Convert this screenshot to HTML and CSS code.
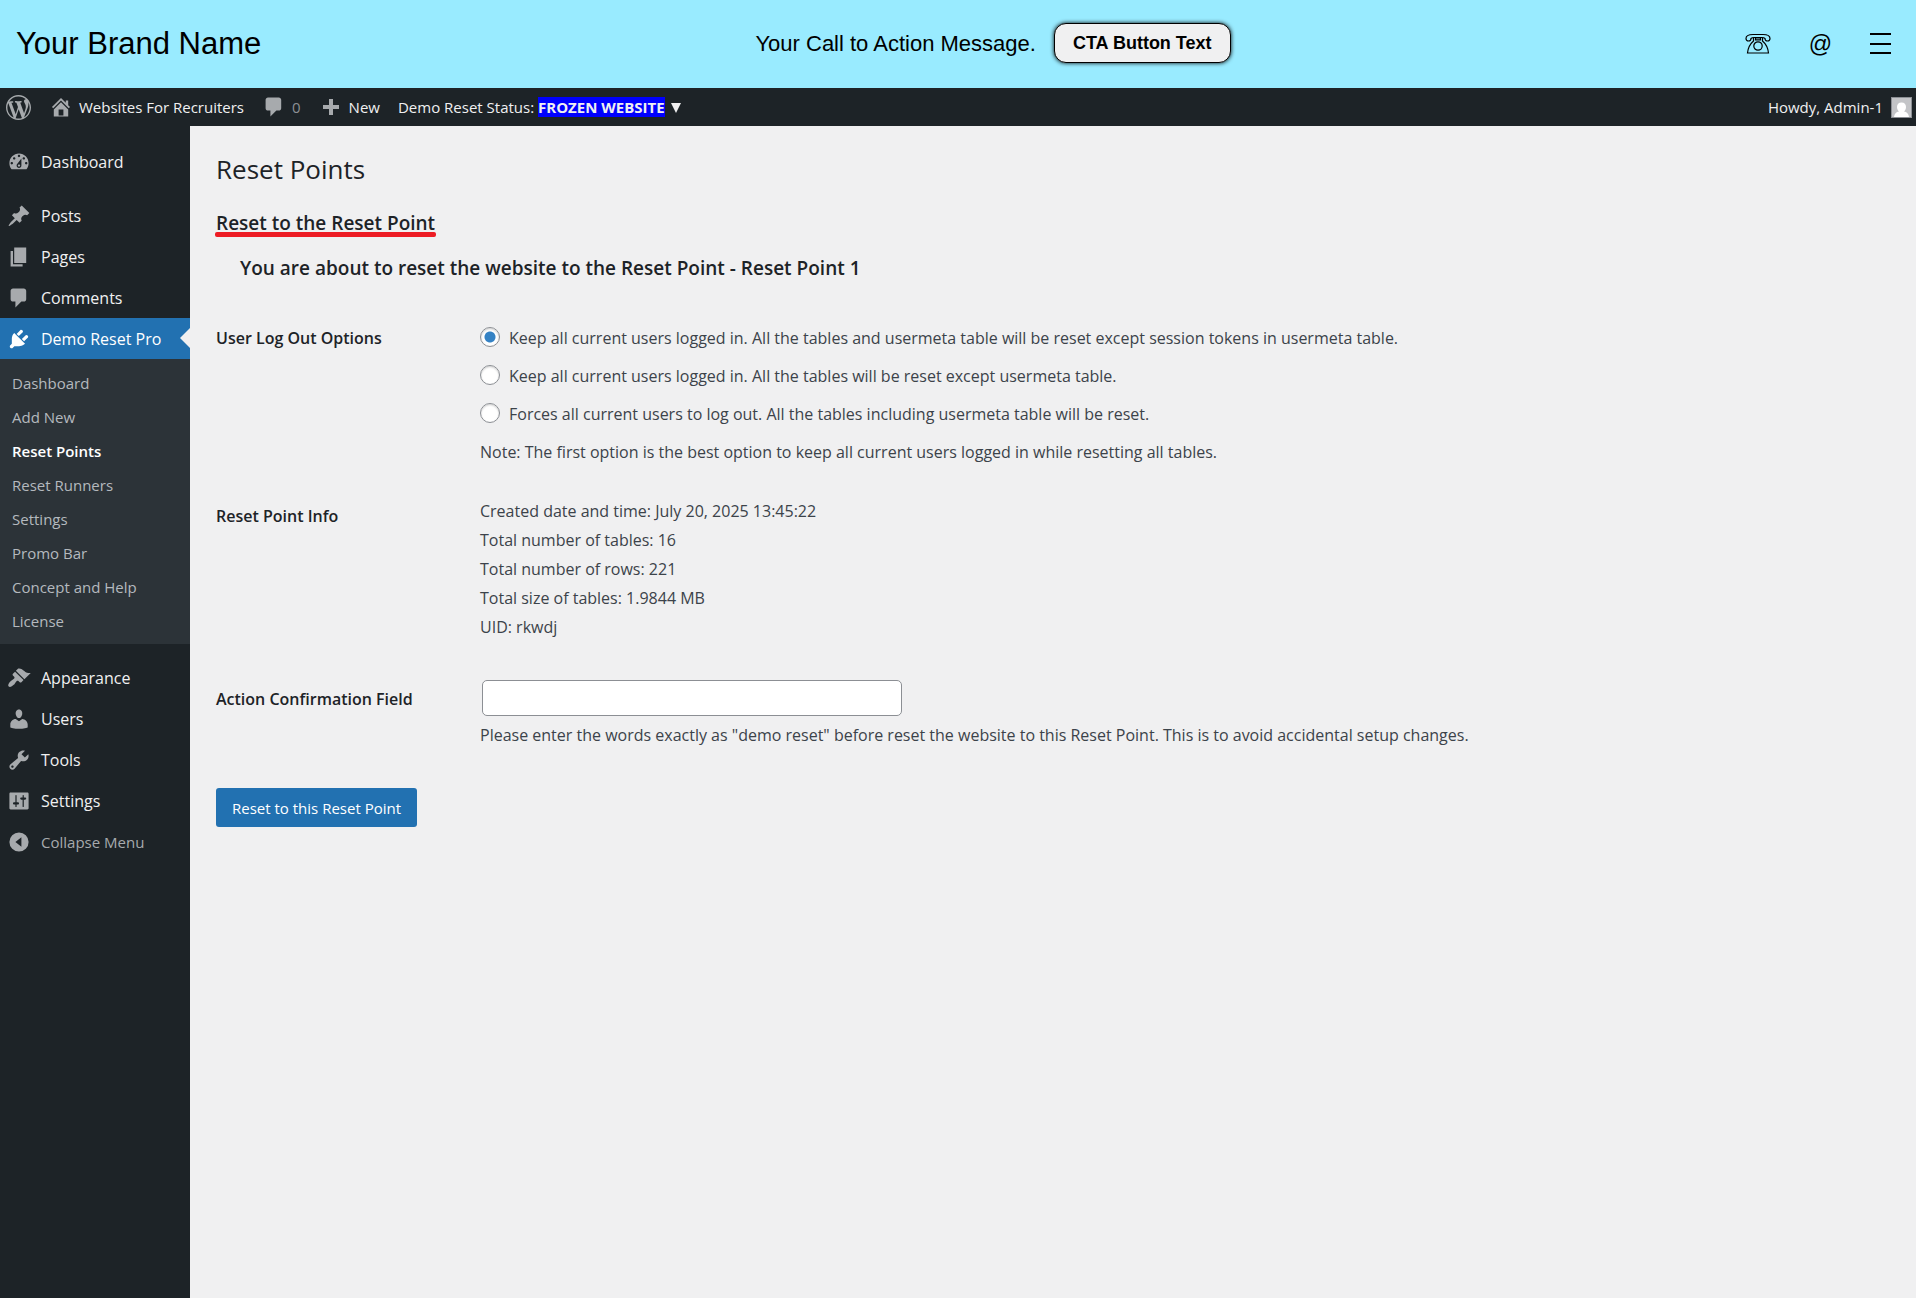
FILE: index.html
```html
<!DOCTYPE html>
<html lang="en">
<head>
<meta charset="utf-8">
<title>Reset Points</title>
<link rel="stylesheet" href="styles.css">
</head>
<body>
<header class="promo">
  <a class="promo-brand" href="#">Your Brand Name</a>
  <div class="promo-cta">
    <span class="promo-message">Your Call to Action Message.</span>
    <button class="promo-button" type="button">CTA Button Text</button>
  </div>
  <nav class="promo-links" aria-label="Contact">
    <a href="#" aria-label="Phone"><svg width="26" height="22" viewBox="0 0 26 22" fill="none" stroke="#000" stroke-width="1.2"><path d="M1 5.500C1 3 3 1.500 8 1.500h10c5 0 7 1.500 7 4 0 1.500-1 2.500-2.500 2.500S20 7 20 5.500c-1-1-2-1-3-1H9c-1 0-2 0-3 1C6 7 5 8 3.500 8S1 7 1 5.500zM8.500 4.500v3.500C5 11 3 15 2.500 20h21C23 15 21 11 17.500 8V4.500"/><path d="M10.500 4.500h5V7h-5z" fill="#000" fill-opacity=".5"/><circle cx="13" cy="13" r="4.200"/></svg></a>
    <a class="promo-at" href="#" aria-label="Email">@</a>
    <a href="#" aria-label="Menu"><svg width="22" height="22" viewBox="0 0 22 22" fill="#000"><path d="M0 0h21v2H0zM0 10h21v2H0zM0 19h21v2H0z"/></svg></a>
  </nav>
</header>

<div class="adminbar">
  <a class="bar-item bar-logo" href="#" aria-label="About WordPress"><svg width="25" height="25" viewBox="0 0 20 20"><path d="M20 10c0-5.510-4.490-10-10-10C4.480 0 0 4.490 0 10c0 5.520 4.480 10 10 10 5.510 0 10-4.480 10-10zM7.780 15.370L4.370 6.220c.55-.02 1.170-.08 1.170-.08.5-.06.44-1.130-.06-1.110 0 0-1.450.11-2.370.11-.18 0-.37 0-.58-.01C4.120 2.690 6.870 1.110 10 1.110c2.330 0 4.450.87 6.050 2.340-.68-.11-1.650.39-1.650 1.580 0 .74.45 1.360.9 2.100.35.61.55 1.360.55 2.460 0 1.490-1.400 5-1.400 5l-3.030-8.370c.54-.02.82-.17.82-.17.5-.05.44-1.250-.06-1.220 0 0-1.440.12-2.380.12-.87 0-2.330-.12-2.330-.12-.5-.03-.56 1.200-.06 1.220l.92.08 1.260 3.410zM17.410 10c.24-.64.74-1.870.43-4.250.7 1.290 1.050 2.710 1.050 4.250 0 3.290-1.730 6.240-4.400 7.780.97-2.590 1.940-5.200 2.920-7.780zM6.100 18.090C3.120 16.650 1.110 13.530 1.110 10c0-1.300.23-2.480.72-3.590C3.250 10.300 4.670 14.200 6.100 18.090zm4.030-6.630l2.580 6.980c-.86.29-1.760.45-2.710.45-.79 0-1.570-.11-2.290-.33.81-2.380 1.620-4.740 2.420-7.100z"/></svg></a>
  <a class="bar-item bar-site" href="#"><svg width="24" height="24" viewBox="0 0 20 20"><path d="M16 8.500l1.530 1.530-1.060 1.060L10 4.600l-6.470 6.490-1.060-1.060L10 2.500l4 4v-2h2v4zm-6-2.460l6 5.990V18H4v-5.970zM12 17v-5H8v5h4z"/></svg>Websites For Recruiters</a>
  <a class="bar-item bar-comments" href="#"><svg width="24" height="24" viewBox="0 0 20 20"><path d="M5 2h9c1.100 0 2 .9 2 2v7c0 1.100-.9 2-2 2h-2l-5 5v-5H5c-1.100 0-2-.9-2-2V4c0-1.100.9-2 2-2z"/></svg>0</a>
  <a class="bar-item bar-new" href="#"><svg width="24" height="24" viewBox="0 0 24 24"><path d="M10 4h4v6h6v4h-6v6h-4v-6H4v-4h6z"/></svg>New</a>
  <a class="bar-item" href="#"><span>Demo Reset Status: <strong class="status">FROZEN WEBSITE</strong></span><svg class="caret" width="10" height="11" viewBox="0 0 10 11"><path d="M0 1h10L5 11z"/></svg></a>
  <a class="bar-item bar-user" href="#">Howdy, Admin-1<svg class="avatar" width="21" height="21" viewBox="0 0 21 21"><path class="avatar-edge" d="M0 0h21v21H0z"/><path class="avatar-bg" d="M1 1h19v19H1z"/><path class="avatar-figure" d="M10.500 5.500c3 0 4.500 2 4.500 4.500 0 2-1 3.500-2 4.500 3 .5 4.500 2 5 5.500h-15c.5-3.500 2-5 5-5.500-1-1-2-2.500-2-4.500 0-2.500 1.500-4.500 4.500-4.500z"/></svg></a>
</div>

<div class="layout">
  <nav class="sidebar" aria-label="Main menu">
    <ul class="menu">
      <li><a class="menu-item" href="#"><svg width="24" height="24" viewBox="0 0 20 20"><path d="M3.760 16h12.480c1.100-1.370 1.760-3.110 1.760-5 0-4.420-3.580-8-8-8s-8 3.580-8 8c0 1.890.66 3.630 1.760 5zM10 4c.55 0 1 .45 1 1s-.45 1-1 1-1-.45-1-1 .45-1 1-1zM6 6c.55 0 1 .45 1 1s-.45 1-1 1-1-.45-1-1 .45-1 1-1zm8 0c.55 0 1 .45 1 1s-.45 1-1 1-1-.45-1-1 .45-1 1-1zm-5.370 5.550L12 7v6c0 1.100-.9 2-2 2s-2-.9-2-2c0-.57.24-1.080.63-1.450zM4 10c.55 0 1 .45 1 1s-.45 1-1 1-1-.45-1-1 .45-1 1-1zm12 0c.55 0 1 .45 1 1s-.45 1-1 1-1-.45-1-1 .45-1 1-1zm-5 3c0-.55-.45-1-1-1s-1 .45-1 1 .45 1 1 1 1-.45 1-1z"/></svg>Dashboard</a></li>
      <li class="menu-group"><a class="menu-item" href="#"><svg width="24" height="24" viewBox="0 0 20 20"><path d="M10.440 3.020l1.820-1.820 6.360 6.350-1.830 1.820c-1.050-.68-2.480-.57-3.410.36l-.75.75c-.92.93-1.040 2.350-.35 3.410l-1.830 1.820-2.410-2.410-2.800 2.790c-.42.42-3.380 2.710-3.800 2.290s1.860-3.390 2.280-3.810l2.790-2.790L4.100 9.360l1.830-1.820c1.050.69 2.480.57 3.400-.36l.75-.75c.93-.92 1.050-2.350.36-3.410z"/></svg>Posts</a></li>
      <li><a class="menu-item" href="#"><svg width="24" height="24" viewBox="0 0 20 20"><path d="M6 15V2h10v13H6zm-1 1h8v2H3V5h2v11z"/></svg>Pages</a></li>
      <li><a class="menu-item" href="#"><svg width="24" height="24" viewBox="0 0 20 20"><path d="M5 2h9c1.100 0 2 .9 2 2v7c0 1.100-.9 2-2 2h-2l-5 5v-5H5c-1.100 0-2-.9-2-2V4c0-1.100.9-2 2-2z"/></svg>Comments</a></li>
      <li>
        <a class="menu-item is-open" href="#"><svg width="24" height="24" viewBox="0 0 20 20"><path d="M13.110 4.360L9.870 7.600 8 5.730l3.240-3.240c.35-.34 1.050-.2 1.560.32.52.51.66 1.210.31 1.550zm-8 1.770l.91-1.120 9.010 9.010-1.190.84c-.71.71-2.630 1.160-3.820 1.160H6.140L4.900 17.260c-.59.59-1.540.59-2.120 0-.59-.58-.59-1.530 0-2.120l1.240-1.240v-3.880c0-1.130.4-3.190 1.090-3.890zm7.260 3.970l3.240-3.240c.34-.35 1.040-.21 1.550.31.52.51.66 1.210.31 1.550l-3.240 3.250z"/></svg>Demo Reset Pro</a>
        <ul class="submenu">
          <li><a href="#">Dashboard</a></li>
          <li><a href="#">Add New</a></li>
          <li><a class="is-current" href="#" aria-current="page">Reset Points</a></li>
          <li><a href="#">Reset Runners</a></li>
          <li><a href="#">Settings</a></li>
          <li><a href="#">Promo Bar</a></li>
          <li><a href="#">Concept and Help</a></li>
          <li><a href="#">License</a></li>
        </ul>
      </li>
      <li class="menu-group"><a class="menu-item" href="#"><svg width="24" height="24" viewBox="0 0 20 20"><path d="M14.480 11.060L7.410 3.990l1.500-1.500c.5-.56 2.300-.47 3.510.32 1.210.8 1.430 1.280 2.910 2.100 1.180.64 2.450 1.260 4.450.85zm-.71.71L6.700 4.700 4.930 6.470c-.39.39-.39 1.020 0 1.410l1.060 1.060c.39.39.39 1.030 0 1.420-.6.6-1.430 1.110-2.210 1.690-.35.26-.7.53-1.010.84C1.430 14.230.4 16.080 1.400 17.070c.99 1 2.840-.03 4.180-1.360.31-.31.58-.66.85-1.020.57-.78 1.080-1.610 1.690-2.210.39-.39 1.020-.39 1.410 0l1.060 1.060c.39.39 1.020.39 1.410 0z"/></svg>Appearance</a></li>
      <li><a class="menu-item" href="#"><svg width="24" height="24" viewBox="0 0 20 20"><path d="M10 9.250c-2.270 0-2.730-3.440-2.730-3.440C7 4.020 7.820 2 9.970 2c2.160 0 2.980 2.020 2.710 3.810 0 0-.41 3.440-2.680 3.440zm0 2.570L12.720 10c2.390 0 4.520 2.330 4.520 4.530v2.490s-3.650 1.130-7.240 1.130c-3.650 0-7.240-1.130-7.240-1.130v-2.490c0-2.250 1.940-4.480 4.470-4.480z"/></svg>Users</a></li>
      <li><a class="menu-item" href="#"><svg width="24" height="24" viewBox="0 0 20 20"><path d="M16.680 9.770c-1.340 1.340-3.300 1.670-4.950.99l-5.410 6.520c-.99.99-2.590.99-3.580 0s-.99-2.590 0-3.570l6.520-5.420c-.68-1.650-.35-3.610.99-4.950 1.280-1.280 3.120-1.620 4.720-1.060l-2.890 2.890 2.820 2.820 2.860-2.870c.53 1.580.18 3.390-1.080 4.650zM3.810 16.210c.4.39 1.040.39 1.430 0 .4-.4.4-1.040 0-1.430-.39-.4-1.030-.4-1.430 0-.39.39-.39 1.030 0 1.430z"/></svg>Tools</a></li>
      <li><a class="menu-item" href="#"><svg width="24" height="24" viewBox="0 0 20 20"><path d="M18 16V4c0-.55-.45-1-1-1H3c-.55 0-1 .45-1 1v12c0 .55.45 1 1 1h14c.55 0 1-.45 1-1zM8 11h1c.55 0 1 .45 1 1s-.45 1-1 1H8v1.500c0 .28-.22.5-.5.5s-.5-.22-.5-.5V13H6c-.55 0-1-.45-1-1s.45-1 1-1h1V5.500c0-.28.22-.5.5-.5s.5.22.5.5V11zm5-2h-1c-.55 0-1-.45-1-1s.45-1 1-1h1V5.500c0-.28.22-.5.5-.5s.5.22.5.5V7h1c.55 0 1 .45 1 1s-.45 1-1 1h-1v5.500c0 .28-.22.5-.5.5s-.5-.22-.5-.5V9z"/></svg>Settings</a></li>
      <li><button class="menu-item menu-collapse" type="button"><svg width="24" height="24" viewBox="0 0 20 20"><path fill-rule="evenodd" d="M10 2a8 8 0 1 0 0 16 8 8 0 0 0 0-16zM12 6v8l-5-4z"/></svg>Collapse Menu</button></li>
    </ul>
  </nav>

  <main class="content">
    <h1 class="title">Reset Points</h1>
    <h2 class="subtitle"><span class="marked">Reset to the Reset Point</span></h2>
    <h2 class="subtitle notice">You are about to reset the website to the Reset Point - Reset Point 1</h2>

    <form class="form">
      <div class="row" role="radiogroup" aria-labelledby="logout-label">
        <div class="label" id="logout-label">User Log Out Options</div>
        <div class="field">
          <label class="option"><input type="radio" name="logout" checked>Keep all current users logged in. All the tables and usermeta table will be reset except session tokens in usermeta table.</label>
          <label class="option"><input type="radio" name="logout">Keep all current users logged in. All the tables will be reset except usermeta table.</label>
          <label class="option"><input type="radio" name="logout">Forces all current users to log out. All the tables including usermeta table will be reset.</label>
          <p class="option">Note: The first option is the best option to keep all current users logged in while resetting all tables.</p>
        </div>
      </div>
      <div class="row row-info">
        <div class="label">Reset Point Info</div>
        <ul class="field info">
          <li>Created date and time: July 20, 2025 13:45:22</li>
          <li>Total number of tables: 16</li>
          <li>Total number of rows: 221</li>
          <li>Total size of tables: 1.9844 MB</li>
          <li>UID: rkwdj</li>
        </ul>
      </div>
      <div class="row row-confirm">
        <label class="label" for="confirm">Action Confirmation Field</label>
        <div class="field">
          <input class="textbox" id="confirm" type="text" aria-describedby="confirm-help">
          <p class="help" id="confirm-help">Please enter the words exactly as "demo reset" before reset the website to this Reset Point. This is to avoid accidental setup changes.</p>
        </div>
      </div>
      <button class="submit" type="button">Reset to this Reset Point</button>
    </form>
  </main>
</div>
</body>
</html>
```
FILE: styles.css
```css
* { box-sizing: border-box; }

body {
  margin: 0;
  min-height: 100vh;
  display: flex;
  flex-direction: column;
  background: #f0f0f1;
  color: #3c434a;
  font: 16px/24px "Open Sans", "Noto Sans", sans-serif;
}

h1, h2, p, ul { margin: 0; padding: 0; }
ul { list-style: none; }
a { color: inherit; text-decoration: none; }
svg { flex: none; display: block; }

/* Promo bar */
.promo {
  display: grid;
  grid-template-columns: 1fr auto 1fr;
  align-items: center;
  height: 88px;
  padding: 0 24px 0 16px;
  background: #99ebff;
  color: #000;
  font-family: "Liberation Sans", Arial, sans-serif;
}
.promo-brand { font-size: 31px; line-height: 36px; }
.promo-cta { display: flex; align-items: center; gap: 18px; padding-left: 78px; }
.promo-message { font-size: 22px; }
.promo-button {
  height: 40px;
  margin-bottom: 2px;
  padding: 0 18px;
  border: 1px solid #000;
  border-radius: 12px;
  background: #f0f0f1;
  box-shadow: 0 0 4px #000;
  color: #000;
  font: bold 18px/20px "Liberation Sans", Arial, sans-serif;
}
.promo-links { display: flex; justify-content: flex-end; align-items: center; gap: 38px; }
.promo-at { font-size: 23px; }

/* Admin bar */
.adminbar {
  display: flex;
  align-items: center;
  gap: 18px;
  height: 38px;
  padding: 0 4px 0 6px;
  background: #1d2327;
  color: #f0f0f1;
  font-size: 15px;
  fill: #a7aaad;
}
.bar-item { display: flex; align-items: center; gap: 6px; white-space: nowrap; }
.bar-comments { color: #8c8f94; }
.bar-user { gap: 8px; margin-left: auto; }
.status { background: #00f; }
.caret { fill: #f0f0f1; }
.avatar-edge { fill: #8c8f94; }
.avatar-bg { fill: #c3c4c7; }
.avatar-figure { fill: #fff; }

/* Sidebar */
.layout { flex: 1; display: flex; }
.sidebar {
  flex: none;
  width: 190px;
  padding-top: 15px;
  background: #1d2327;
}
.menu-group { margin-top: 13px; }
.menu-item {
  position: relative;
  display: flex;
  align-items: center;
  gap: 10px;
  width: 100%;
  height: 41px;
  padding: 0 0 0 7px;
  border: 0;
  background: none;
  color: #f0f0f1;
  fill: #a7aaad;
  font: inherit;
}
.menu-collapse { color: #a7aaad; font-size: 15px; }
.is-open { background: #2271b1; color: #fff; fill: #fff; }
.is-open::after {
  content: "";
  position: absolute;
  right: 0;
  top: 10px;
  border: 10px solid transparent;
  border-left: 0;
  border-right-color: #f0f0f1;
}
.submenu {
  padding: 7px 0 6px;
  background: #2c3338;
  color: #b4b9be;
  font-size: 15px;
}
.submenu a { display: block; padding: 5px 12px; }
.submenu .is-current { color: #fff; font-weight: 600; }

/* Page */
.content { flex: 1; padding: 26px; }
.title { color: #1d2327; font-size: 26px; font-weight: 400; line-height: 34px; }
.subtitle { color: #1d2327; font-size: 19px; font-weight: 600; line-height: 28px; margin-top: 23px; }
.marked { position: relative; }
.marked::after {
  content: "";
  position: absolute;
  left: -1px;
  right: -1px;
  bottom: -1px;
  height: 5px;
  border-radius: 2px;
  background: #ed1c24;
}
.notice { margin-top: 17px; padding-left: 24px; }

.form { margin-top: 37px; }
.row { display: grid; grid-template-columns: 264px 1fr; }
.row-info { margin-top: 26px; }
.row-confirm { margin-top: 38px; }
.label { color: #1d2327; font-weight: 600; padding-top: 7px; }
.option { display: flex; align-items: center; gap: 9px; height: 38px; }
.info li { line-height: 29px; }
.row input[type="radio"] {
  appearance: none;
  flex: none;
  width: 20px;
  height: 20px;
  margin: 0 0 2px;
  border: 1px solid #8c8f94;
  border-radius: 50%;
  background: #fff;
  box-shadow: inset 0 1px 2px rgb(0 0 0 / 20%);
}
.row input[type="radio"]:checked { background: radial-gradient(circle, #3582c4 5px, #fff 6px); }
.textbox {
  display: block;
  width: 420px;
  height: 36px;
  margin-left: 2px;
  padding: 0 10px;
  border: 1px solid #8c8f94;
  border-radius: 5px;
  background: #fff;
  font: inherit;
}
.help { margin-top: 7px; }
.submit {
  height: 39px;
  margin-top: 41px;
  padding: 0 16px;
  border: 0;
  border-radius: 3px;
  background: #2271b1;
  color: #fff;
  font: 15px/20px "Open Sans", "Noto Sans", sans-serif;
}
```
